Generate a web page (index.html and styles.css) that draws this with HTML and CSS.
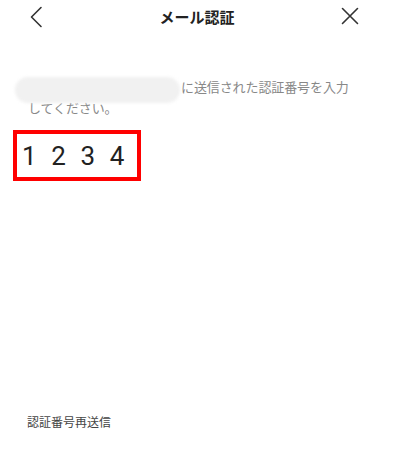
FILE: index.html
```html
<!DOCTYPE html>
<html lang="ja">
<head>
<meta charset="utf-8">
<link rel="stylesheet" href="styles.css">
</head>
<body>
<div class="screen">
  <header class="bar">
    <svg class="icon back" width="14" height="22" viewBox="0 0 14 22"><path d="M12 1.5 L2.5 11 L12 20.5" fill="none" stroke="#333" stroke-width="1.6" stroke-linecap="round" stroke-linejoin="round"/></svg>
    <h1 class="title">メール認証</h1>
    <svg class="icon close" width="18" height="18" viewBox="0 0 18 18"><path d="M1.5 1.5 L16.5 16.5 M16.5 1.5 L1.5 16.5" fill="none" stroke="#333" stroke-width="1.6" stroke-linecap="round"/></svg>
  </header>
  <main class="content">
    <p class="lead"><span class="masked"></span>に送信された認証番号を入力<br>してください。</p>
    <div class="code">
      <span class="digit">1</span><span class="digit">2</span><span class="digit">3</span><span class="digit">4</span>
    </div>
  </main>
  <footer class="foot">
    <a class="resend">認証番号再送信</a>
  </footer>
</div>
</body>
</html>
```
FILE: styles.css
```css
html, body {
  margin: 0;
  padding: 0;
  background: #fff;
}
body {
  font-family: "Noto Sans CJK JP", "Noto Sans", sans-serif;
}
.screen {
  width: 400px;
  height: 450px;
  display: flex;
  flex-direction: column;
}
.bar {
  height: 34px;
  display: flex;
  align-items: center;
  justify-content: space-between;
  padding: 0 41px 0 29px;
}
.title {
  margin: 0 0 0 10px;
  font-size: 15px;
  font-weight: 700;
  color: #222;
  line-height: 20px;
}
.close { margin-top: -2px; }
.content {
  flex: 1;
  padding: 44px 0 0 28px;
}
.lead {
  margin: 0;
  font-size: 13px;
  line-height: 18px;
  color: #888;
  letter-spacing: -0.1px;
}
.masked {
  display: inline-block;
  width: 165px;
  height: 26px;
  margin: -4px 1px -4px -13px;
  vertical-align: -7px;
  background: #f1f1f1;
  border-radius: 13px;
  filter: blur(1.5px);
}
.code {
  margin: 13px 0 0 -15px;
  width: 117px;
  height: 43px;
  border: 4px solid #ff0000;
  display: flex;
  align-items: center;
  padding-left: 3px;
}
.digit {
  width: 29px;
  font-family: "Roboto", "Noto Sans", sans-serif;
  font-size: 26px;
  color: #222;
  line-height: 30px;
  padding-left: 2px;
}
.foot {
  padding: 0 0 18px 27px;
}
.resend {
  font-size: 12px;
  line-height: 16px;
  color: #444;
}
```
